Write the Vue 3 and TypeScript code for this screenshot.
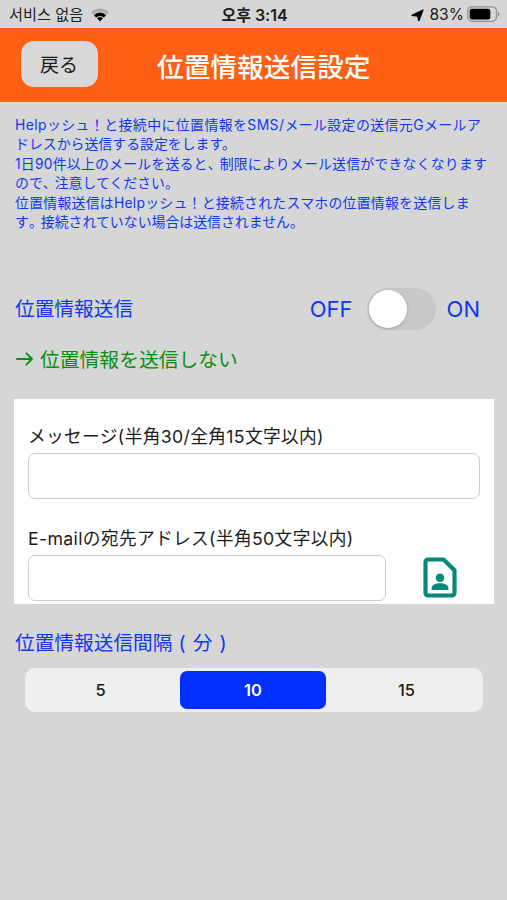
<script setup lang="ts">
import { ref } from 'vue'

const notes: string[][] = [
  ['Helpッシュ！と接続中に位置情報をSMS/メール設定の送信元Gメールア'],
  ['ドレスから送信する設定をします。'],
  ['1日90件以上のメールを送ると', '、', '制限によりメール送信ができなくなります'],
  ['ので', '、', '注意してください。'],
  ['位置情報送信はHelpッシュ！と接続されたスマホの位置情報を送信しま'],
  ['す', '。', '接続されていない場合は送信されません。'],
]
const intervals = [5, 10, 15]
const interval = ref(10)
const enabled = ref(false)
const message = ref('')
const email = ref('')
</script>

<template>
  <div class="screen">
    <div class="status">
      <div class="carrier">
        <span>서비스 없음</span>
        <svg class="wifi" viewBox="0 0 20 15">
          <path d="M1 5.1a13.2 13.2 0 0 1 18 0l-2.1 2.200a10.1 10.1 0 0 0-13.800 0z" fill="#a9a9a9" />
          <path d="M3.800 8a8.800 8.800 0 0 1 12.400 0l-2.300 2.500a5.800 5.800 0 0 0-7.800 0z" fill="#000" />
          <path d="M7 11.3a4.400 4.400 0 0 1 6 0l-3 3.100z" fill="#000" />
        </svg>
      </div>
      <div class="time">오후 3:14</div>
      <div class="power">
        <svg class="arrow" viewBox="0 0 14 14"><path d="M12.800 1.200 8.400 12.600 7.300 7.500 1.200 6.800z" fill="#000" stroke="#000" stroke-width="1.500" stroke-linejoin="round" /></svg>
        <span>83%</span>
        <svg class="battery" viewBox="0 0 33 17">
          <rect x=".8" y=".8" width="28.700" height="14.600" rx="4.300" fill="none" stroke="#929292" stroke-width="1.300" />
          <rect x="2.700" y="2.800" width="20.600" height="10.600" rx="2.200" fill="#000" />
          <path d="M31 5.800c2 .8 2 3.800 0 4.600z" fill="#929292" />
        </svg>
      </div>
    </div>

    <header class="bar">
      <button class="back">戻る</button>
      <h1>位置情報送信設定</h1>
    </header>

    <main>
      <div class="notes">
        <p v-for="(line, i) in notes" :key="i" :class="'n' + i">
          <span v-for="(part, j) in line" :key="j" :class="{ mark: j === 1 }">{{ part }}</span>
        </p>
      </div>

      <div class="toggle-row">
        <span class="toggle-label">位置情報送信</span>
        <span class="off">OFF</span>
        <button class="switch" :class="{ on: enabled }" @click="enabled = !enabled"><i /></button>
        <span>ON</span>
      </div>

      <div class="state">
        <svg viewBox="0 0 18 16"><path d="M1 8h15M10.400 2.400 16 8l-5.600 5.600" fill="none" stroke="#0a900e" stroke-width="1.800" stroke-linecap="round" stroke-linejoin="round" /></svg>
        <span>位置情報を送信しない</span>
      </div>

      <section class="card">
        <label class="l1">メッセージ(半角30/全角15文字以内)</label>
        <input v-model="message" class="field" />
        <label class="l2">E-mailの宛先アドレス(半角50文字以内)</label>
        <div class="mail-row">
          <input v-model="email" class="field" />
          <svg class="contact" viewBox="0 0 34 42" preserveAspectRatio="none">
            <path d="M5 2.500h15.500L31.500 13.500V37a2.500 2.500 0 0 1-2.500 2.500H5A2.500 2.500 0 0 1 2.500 37V5A2.500 2.500 0 0 1 5 2.500z" fill="none" stroke="#07897a" stroke-width="4.200" stroke-linejoin="round" />
            <circle cx="17" cy="21.300" r="4.300" fill="#07897a" />
            <path d="M8.600 33.800v-1.800c0-3.500 4.200-5 8.400-5s8.400 1.500 8.400 5v1.800z" fill="#07897a" />
          </svg>
        </div>
      </section>

      <div class="interval-label">位置情報送信間隔<span class="open">(</span>分<span class="close">)</span></div>
      <div class="segments">
        <button v-for="n in intervals" :key="n" :class="{ active: n === interval }" @click="interval = n">{{ n }}</button>
      </div>
    </main>
  </div>
</template>

<style>
body { background: #d6d6d6; }
</style>

<style scoped>
* { box-sizing: border-box; }
.screen {
  height: 900px;
  background: #d6d6d6;
  font-family: Inter, "Noto Sans CJK JP", sans-serif;
  color: #1c1c1c;
  overflow: hidden;
}
button { border: 0; padding: 0; font-family: inherit; color: inherit; }
.status {
  height: 28px;
  display: grid;
  grid-template-columns: 1fr auto 1fr;
  align-items: center;
  font-family: Inter, "Noto Sans CJK KR", sans-serif;
  font-size: 15.200px;
  line-height: 28px;
  padding: 0 7px 0 9px;
  white-space: nowrap;
}
.carrier, .power { display: flex; align-items: center; }
.wifi { width: 20px; height: 15px; margin-left: 7px; }
.time { font-weight: 600; font-size: 16px; padding-top: 1px; }
.power { justify-content: flex-end; padding-top: 1px; font-size: 15.600px; }
.arrow { width: 13px; height: 13px; margin-right: 5px; }
.battery { width: 33px; height: 17px; margin: 0 0 2px 3px; }
.bar { height: 74px; background: #ff6014; display: flex; align-items: center; padding-left: 21px; }
.back {
  width: 77px;
  height: 46px;
  border-radius: 13px;
  background: #d8d8d8;
  font-size: 19px;
  margin-bottom: 2px;
  padding: 0 1px 2px 0;
}
h1 { margin: 4px 0 0 59px; font-size: 26.700px; line-height: 40px; font-weight: 500; color: #fff; white-space: nowrap; }
main { padding: 14px 13px 0 14px; }
.notes { height: 117px; color: #0f38f2; font-size: 13.900px; }
.notes p { margin: 0 0 0 1px; height: 19.400px; line-height: 19.400px; white-space: nowrap; }
.notes .n0 { letter-spacing: .42px; }
.notes .n2 { letter-spacing: .2px; }
.notes .n4 { letter-spacing: .24px; }
.notes .mark { letter-spacing: -2px; }
.toggle-row {
  margin-top: 54px;
  height: 44px;
  display: flex;
  align-items: center;
  color: #0f38f2;
  font-size: 22px;
  padding: 0 14px 0 1px;
}
.toggle-label { font-size: 19.700px; margin: 0 auto 3px 0; }
.switch { width: 69px; height: 42px; border-radius: 21px; background: #c8c8c8; margin: 0 11px 0 14px; padding: 2px; display: flex; }
.switch i { width: 38px; height: 38px; border-radius: 50%; background: #fff; box-shadow: 0 1px 3px rgba(0, 0, 0, .2); }
.switch.on { justify-content: flex-end; background: #34c759; }
.state { margin-top: 11px; height: 34px; display: flex; align-items: center; color: #0a900e; font-size: 19.800px; padding-left: 2px; }
.state svg { width: 18px; height: 16px; margin-right: 6px; }
.state span { margin-bottom: 2px; }
.card { margin-top: 23px; height: 205px; background: #fff; padding: 22px 14px 0; width: 480px; }
label { display: block; height: 32px; line-height: 31px; font-size: 17.700px; letter-spacing: .35px; white-space: nowrap; }
.l2 { margin-top: 24px; }
.field { display: block; width: 452px; height: 46px; border: 1.500px solid #cdcdcd; border-radius: 7px; background: #fff; outline: 0; padding: 0 10px; font: inherit; font-size: 17px; }
.mail-row { display: flex; }
.mail-row .field { width: 358px; }
.contact { width: 34px; height: 41px; margin: 2px 0 0 36.500px; }
.interval-label { height: 64px; padding: 24px 0 0 1px; line-height: 30px; font-size: 19.700px; color: #0f38f2; display: flex; white-space: nowrap; }
.open { margin: 0 7px 0 6px; }
.close { margin-left: 7px; }
.segments { margin-left: 11px; width: 458px; height: 44px; border-radius: 10px; background: #efefef; display: grid; grid-template-columns: 155px 146px 1fr; padding: 3px 0; }
.segments button { background: transparent; border-radius: 7px; font-size: 16.500px; font-weight: 500; }
.segments button:first-child { padding-right: 4px; }
.segments button:last-child { padding-left: 4px; }
.segments .active { background: #002fff; color: #fff; font-weight: 600; }
</style>
